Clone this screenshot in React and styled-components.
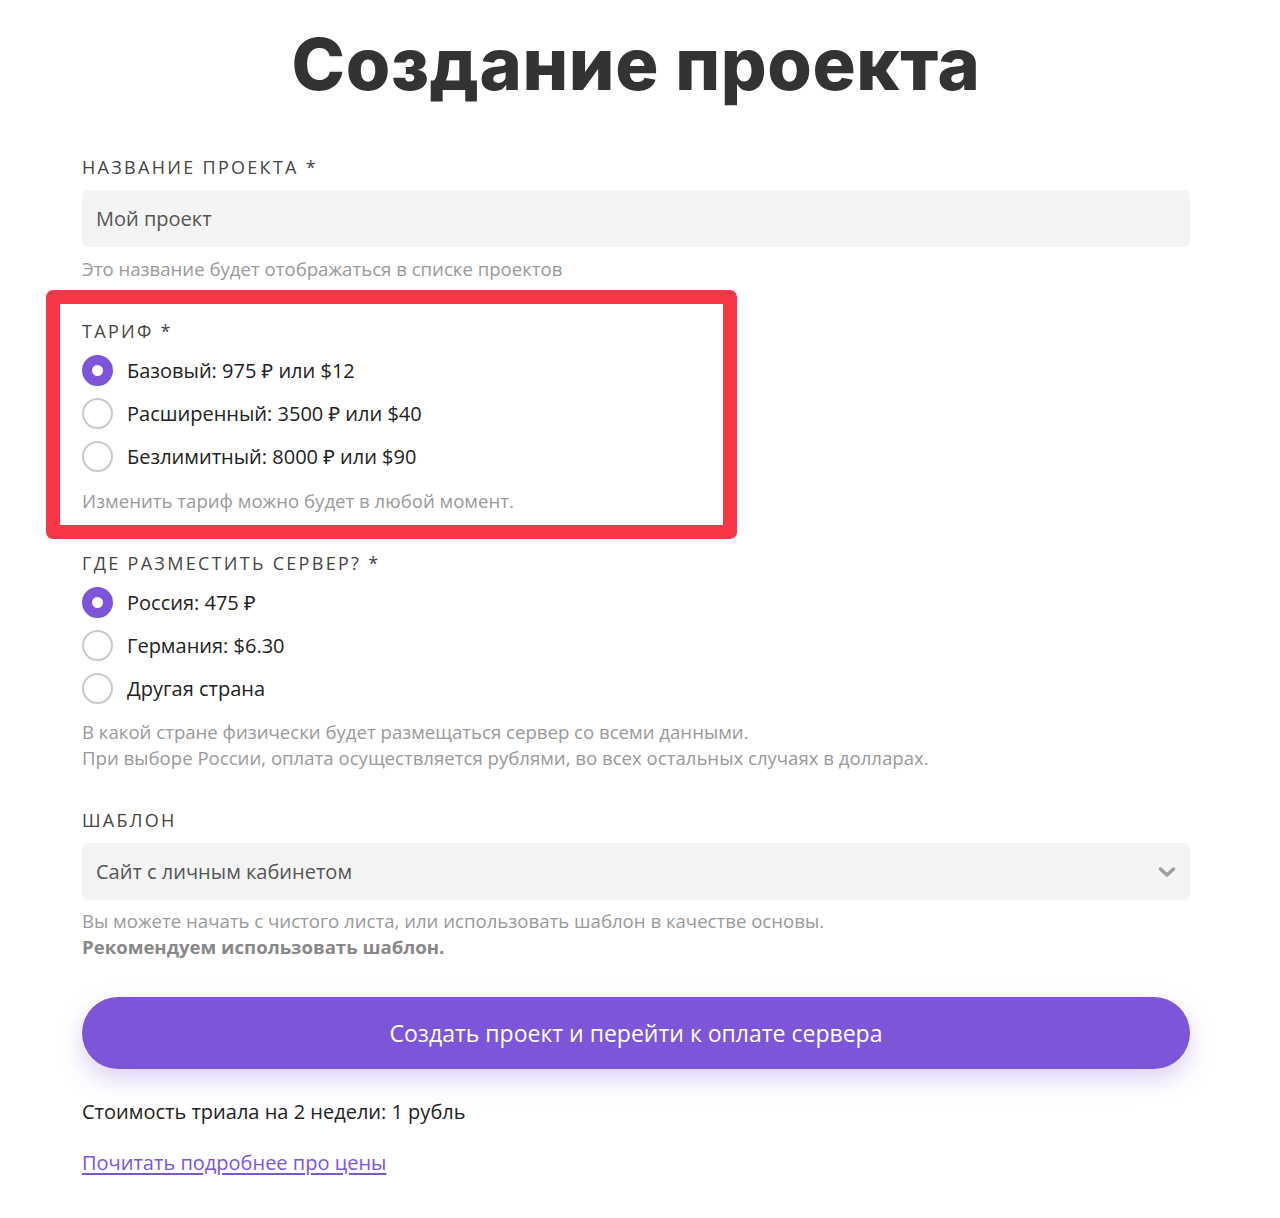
import React, { useState } from 'react';
import styled, { createGlobalStyle } from 'styled-components';

const GlobalStyle = createGlobalStyle`
  body {
    margin: 0;
    background: #fff;
    font-family: 'Open Sans', 'Noto Sans', sans-serif;
    color: #222;
  }
`;

const PURPLE = '#7d55d8';

const StyledPage = styled.div`
  width: 1108px;
  margin-left: 82px;
  padding-bottom: 40px;
`;

const StyledTitle = styled.h1`
  margin: 16px 0 0;
  text-align: center;
  font-family: Inter, 'Open Sans', sans-serif;
  font-weight: 800;
  font-size: 72px;
  line-height: 96px;
  color: #333;
  letter-spacing: 0.6px;
`;

const StyledForm = styled.form`
  display: flex;
  flex-direction: column;
  gap: 37px;
  margin-top: 43px;
`;

const StyledField = styled.div`
  position: relative;
  display: flex;
  flex-direction: column;
`;

const StyledLabel = styled.div`
  font-size: 18px;
  line-height: 24px;
  letter-spacing: 2.3px;
  color: #444;
  margin-bottom: ${(p) => p.$gap || 11}px;
`;

const StyledInput = styled.input`
  box-sizing: border-box;
  height: 57px;
  border: none;
  border-radius: 6px;
  background: #f4f4f4;
  padding: 0 14px;
  font-family: inherit;
  font-size: 20px;
  color: #555;
  outline: none;

  &::placeholder {
    color: #555;
  }
`;

const StyledSelectBox = styled.div`
  box-sizing: border-box;
  height: 57px;
  border-radius: 6px;
  background: #f4f4f4;
  padding: 0 14px;
  display: flex;
  align-items: center;
  justify-content: space-between;
  font-size: 20px;
  color: #555;
`;

const StyledHint = styled.div`
  margin-top: ${(p) => p.$gap || 9}px;
  font-size: 18.6px;
  line-height: 26px;
  color: #999;

  b {
    font-weight: 700;
    color: #888;
  }
`;

const StyledRadioRow = styled.label`
  display: flex;
  align-items: center;
  gap: 14px;
  height: 43px;
  font-size: 20px;
  color: #222;
  cursor: pointer;
`;

const StyledRadioDot = styled.span`
  box-sizing: border-box;
  width: 31px;
  height: 31px;
  border-radius: 50%;
  flex-shrink: 0;
  background: #fff;
  border: ${(p) => (p.$checked ? `10px solid ${PURPLE}` : '2.5px solid #c9c9c9')};
`;

const StyledHighlight = styled.span`
  position: absolute;
  box-sizing: border-box;
  left: -36px;
  top: -29px;
  width: 691px;
  bottom: -25px;
  border: 14px solid #f93645;
  border-radius: 7px;
  pointer-events: none;
`;

const StyledButton = styled.button`
  height: 72px;
  border: none;
  border-radius: 36px;
  background: ${PURPLE};
  color: #fff;
  font-family: inherit;
  font-size: 23px;
  box-shadow: 0 10px 24px rgba(125, 85, 216, 0.28);
  cursor: pointer;
`;

const StyledFooter = styled.div`
  display: flex;
  flex-direction: column;
  gap: 25px;
  margin-top: -7px;
  font-size: 20px;
  line-height: 26px;
  color: #222;
`;

const StyledLink = styled.a`
  color: ${PURPLE};
  text-decoration: underline;
  text-underline-offset: 3px;
  align-self: flex-start;
`;

const Chevron = () => (
  <svg width="18" height="12" viewBox="0 0 18 12" fill="none">
    <path d="M2.5 3 L9 9 L15.5 3" stroke="#9d9d9d" strokeWidth="3.5" strokeLinecap="round" strokeLinejoin="round" />
  </svg>
);

const RadioGroup = ({ options, value, onChange }) => (
  <div>
    {options.map((opt, i) => (
      <StyledRadioRow key={opt} onClick={() => onChange(i)}>
        <StyledRadioDot $checked={value === i} />
        {opt}
      </StyledRadioRow>
    ))}
  </div>
);

const tariffs = [
  'Базовый: 975 ₽ или $12',
  'Расширенный: 3500 ₽ или $40',
  'Безлимитный: 8000 ₽ или $90',
];

const servers = ['Россия: 475 ₽', 'Германия: $6.30', 'Другая страна'];

const App = () => {
  const [tariff, setTariff] = useState(0);
  const [server, setServer] = useState(0);

  return (
    <StyledPage>
      <GlobalStyle />
      <StyledTitle>Создание проекта</StyledTitle>
      <StyledForm onSubmit={(e) => e.preventDefault()}>
        <StyledField>
          <StyledLabel>НАЗВАНИЕ ПРОЕКТА *</StyledLabel>
          <StyledInput placeholder="Мой проект" />
          <StyledHint>Это название будет отображаться в списке проектов</StyledHint>
        </StyledField>

        <StyledField>
          <StyledHighlight />
          <StyledLabel $gap={6}>ТАРИФ *</StyledLabel>
          <RadioGroup options={tariffs} value={tariff} onChange={setTariff} />
          <StyledHint $gap={10}>Изменить тариф можно будет в любой момент.</StyledHint>
        </StyledField>

        <StyledField>
          <StyledLabel $gap={6}>ГДЕ РАЗМЕСТИТЬ СЕРВЕР? *</StyledLabel>
          <RadioGroup options={servers} value={server} onChange={setServer} />
          <StyledHint $gap={9}>
            В какой стране физически будет размещаться сервер со всеми данными.
            <br />
            При выборе России, оплата осуществляется рублями, во всех остальных случаях в долларах.
          </StyledHint>
        </StyledField>

        <StyledField>
          <StyledLabel>ШАБЛОН</StyledLabel>
          <StyledSelectBox>
            Сайт с личным кабинетом
            <Chevron />
          </StyledSelectBox>
          <StyledHint $gap={8}>
            Вы можете начать с чистого листа, или использовать шаблон в качестве основы.
            <br />
            <b>Рекомендуем использовать шаблон.</b>
          </StyledHint>
        </StyledField>

        <StyledButton type="submit">Создать проект и перейти к оплате сервера</StyledButton>

        <StyledFooter>
          <div>Стоимость триала на 2 недели: 1 рубль</div>
          <StyledLink href="#">Почитать подробнее про цены</StyledLink>
        </StyledFooter>
      </StyledForm>
    </StyledPage>
  );
};

export default App;
